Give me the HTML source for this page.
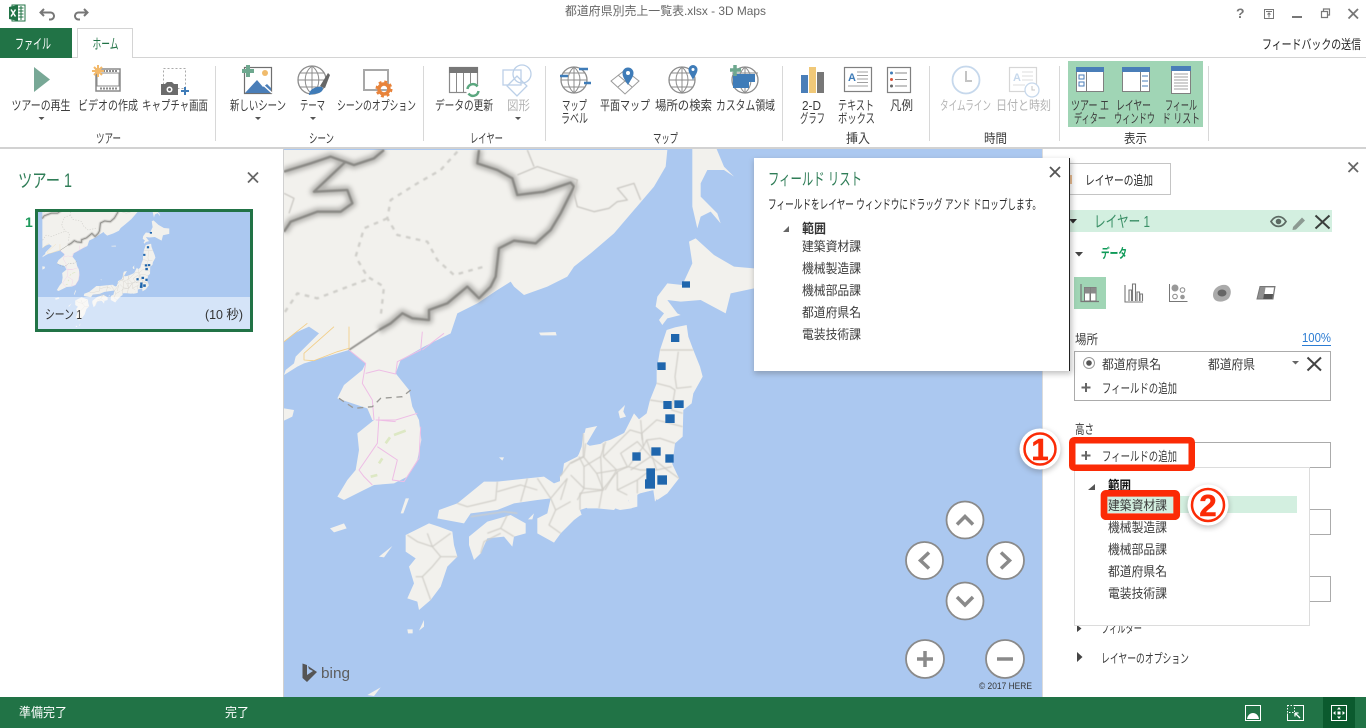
<!DOCTYPE html>
<html lang="ja"><head><meta charset="utf-8"><title>3D Maps</title>
<style>
html,body{margin:0;padding:0;width:1366px;height:728px;overflow:hidden;background:#fff}
svg{display:block}
text{font-family:"Liberation Sans","Noto Sans CJK JP",sans-serif;font-size:13px;fill:#3c3c3c}
.g{fill:#217346}.w{fill:#fff}.d{fill:#b4b4b4}.b{font-weight:700}
.i{fill:none;stroke:#808080;stroke-width:1.2}
</style></head><body>
<svg width="1366" height="728" viewBox="0 0 1366 728" xmlns="http://www.w3.org/2000/svg">
<defs>
<filter id="bl" x="-10%" y="-10%" width="120%" height="120%"><feGaussianBlur stdDeviation="7"/></filter>
<filter id="b2" x="-5%" y="-5%" width="110%" height="110%"><feGaussianBlur stdDeviation="1.500"/></filter>
<filter id="sh" x="-10%" y="-10%" width="120%" height="120%"><feGaussianBlur stdDeviation="3"/></filter>
<clipPath id="cm"><rect x="284" y="149" width="759" height="548"/></clipPath>
<clipPath id="ct"><rect x="38" y="212" width="212" height="117"/></clipPath>
<g id="land" transform="translate(284,150) scale(.33333)">
<g fill="#f2f1ed">
<polygon points="0,0 1150,0 1145,50 1110,110 1050,180 990,250 920,310 870,350 850,380 790,410 720,435 690,410 680,395 640,420 580,460 520,490 500,550 420,590 350,630 335,670 375,720 385,770 405,810 412,870 400,930 370,980 330,1000 270,1005 230,1025 180,1050 160,1040 190,990 215,960 225,900 220,850 270,810 265,810 250,775 160,745 180,705 235,660 245,640 195,600 60,640 40,650 0,675 5,660 30,640 35,620 65,590 105,550 75,530 30,550 0,575"/>
<polygon points="0,775 30,780 25,800 0,812"/>
<polygon points="1225,-10 1295,-10 1320,50 1350,80 1320,60 1270,60 1250,100 1250,140 1300,190 1310,220 1280,185 1250,200 1240,235 1225,170"/>
<polygon points="1215,275 1235,265 1290,315 1350,350 1410,355 1410,415 1340,430 1325,490 1250,450 1190,455 1150,450 1180,490 1190,495 1150,505 1135,525 1125,510 1140,490 1115,470 1120,440 1150,400 1195,405 1225,340"/>
<polygon points="765,548 815,546 818,556 770,556"/>
<g transform="translate(828,360)">
<polygon points="320,180 345,172 380,165 385,200 400,240 420,290 428,320 400,370 395,400 370,420 368,500 345,520 340,560 335,590 355,620 330,630 310,660 285,695 280,660 240,670 205,690 215,715 180,720 120,700 60,720 65,735 30,745 0,760 0,620 50,570 65,530 70,490 110,470 75,530 130,520 210,480 215,465 260,430 270,390 290,340 290,300 300,240"/>
<polygon points="175,425 195,405 190,425 198,440 180,445"/>
</g>
<g transform="translate(0,810)">
<polygon points="1050,-20 1015,50 960,65 930,85 905,70 918,45 940,18 905,25 900,50 905,70 880,110 840,130 835,165 850,175 810,190 780,170 730,175 640,185 600,185 520,250 465,270 460,295 540,310 560,280 640,270 690,250 760,240 800,235 790,280 760,295 760,340 810,368 830,340 870,300 890,285 865,265 880,240 910,265 940,265 990,270 1030,225 1040,265 1060,260 1060,220 1110,210 1120,240 1150,220 1185,175 1150,100"/>
<polygon points="555,350 610,305 680,285 725,310 725,340 690,350 685,380 660,350 610,355 590,400 570,420 555,375"/>
<polygon points="365,345 435,310 465,320 505,335 510,375 520,410 490,440 470,500 440,540 405,570 400,545 370,535 390,490 375,440 395,415 365,395"/>
<polygon points="138,325 180,310 188,325 150,337"/>
<polygon points="350,280 365,235 375,235 358,280"/>
<polygon points="285,410 325,378 300,412"/>
<polygon points="370,628 386,628 386,640 372,640"/>
<polygon points="405,632 420,600 420,620"/>
<polygon points="250,825 290,802 270,828"/>
<polygon points="645,112 660,112 655,122"/>
<polygon points="732,298 750,280 745,298"/>
</g>
</g>
<g fill="none" stroke-linejoin="round">
<path d="M520,5 470,60 400,100 320,150 310,205 340,255 430,275 460,330 510,375 600,350M310,205 240,235 215,320 250,380 300,410 290,500M245,390 100,445 40,430 0,490" stroke="#cfcec9" stroke-width="7" stroke-dasharray="14 16" filter="url(#b2)"/>
<path d="M285,540 320,520 355,490 385,505 435,510 435,480 490,460 550,410 570,430 585,445 620,410 635,380 645,295 690,272 755,280 800,240 830,190 870,110 860,98 780,125 700,135 685,85 640,60 580,40 585,0M0,65 80,40 140,20 210,45 270,25 300,0M185,35 90,125 190,120 205,160 170,185 100,185 20,215 0,245" stroke="#8e8d89" stroke-width="24" opacity=".6" filter="url(#bl)"/>
<path d="M285,540 320,520 355,490 385,505 435,510 435,480 490,460 550,410 570,430 585,445 620,410 635,380 645,295 690,272 755,280 800,240 830,190 870,110 860,98 780,125 700,135 685,85 640,60 580,40 585,0M0,65 80,40 140,20 210,45 270,25 300,0M185,35 90,125 190,120 205,160 170,185 100,185 20,215 0,245" stroke="#8a8985" stroke-width="7" filter="url(#b2)"/>
<path d="M285,540 195,600" stroke="#8f8e8a" stroke-width="5" filter="url(#b2)"/>
<path d="M700,75 760,50 880,90 870,130 880,170 930,185 975,175 1000,155 1030,150 1000,115 1050,100 1070,150M730,0 750,50M0,130 30,145 15,190" stroke="#cac8c3" stroke-width="4" filter="url(#b2)"/>
<path d="M195,600 245,640 235,700 265,750 270,810M245,670 285,660 335,672 340,635 410,600 415,545M415,600 480,550M275,810 335,810 400,790" stroke="#eebde5" stroke-width="3"/>
<path d="M0,575 70,520M150,530 60,610 60,630 90,632 160,605 195,595 195,530" stroke="#f2cd85" stroke-width="2.500"/>
<path d="M165,745 210,775 265,770 290,745 355,740 380,720" stroke="#9a9995" stroke-width="4" stroke-dasharray="18 14"/>
<g transform="translate(0,810)">
<path d="M285,-10 280,70 225,150 240,170 265,195M280,80 340,120 325,180 360,185 405,115 410,20M280,0 335,5" stroke="#eebde5" stroke-width="3"/>
<path d="M330,45 365,32M305,70 318,52M260,170 280,165M285,130 295,115" stroke="#dde8c4" stroke-width="8"/>
<path d="M860,130 900,110 905,70M885,110 900,140 900,205 880,240M900,140 950,110 965,65M950,110 955,210 945,265M860,165 900,205 955,210 1000,155 1030,140 1010,100 1060,65 1100,110M1000,155 1000,210 1030,225M1060,180 1060,220M1040,150 1100,110 1150,150 1185,175M1075,60 1070,0M1000,210 1060,180 1100,150M640,185 635,240 550,260 520,250M730,175 710,245M640,215 710,195 760,210M760,175 800,235 850,175M800,235 815,270 795,315 830,340M815,270 860,245M830,240 850,175M560,290 660,275 700,280M610,340 650,325 690,350M650,325 670,285M590,400 600,365 650,340M430,340 445,380 500,340M370,345 400,365 445,380 470,410 445,440 415,470 440,540M470,410 520,410M395,470 415,470" stroke="#d0cec8" stroke-width="3.500" filter="url(#b2)"/>
</g>
<g transform="translate(828,360)">
<path d="M300,240 345,240 400,240M355,245 345,320 350,355 395,350M290,340 330,350 345,360 335,420 368,430M270,390 335,400M245,490 290,450 368,470M245,490 250,530 260,510 300,505 345,520M250,530 205,590 170,600 135,660M205,590 240,600 290,600 335,590M260,510 290,600M130,520 130,560 170,600 110,610 70,560 30,580 0,620M70,490 70,560M130,560 210,480 245,490M110,610 130,660 60,670 60,720" stroke="#d0cec8" stroke-width="3.500" filter="url(#b2)"/>
</g>
</g>
</g>
<g id="mk" transform="translate(284,150) scale(.33333)"><g fill="#1f66ad" transform="translate(828,360)">
<rect x="366" y="34" width="24" height="19"/><rect x="333" y="192" width="25" height="24"/><rect x="292" y="277" width="25" height="23"/><rect x="310" y="393" width="25" height="24"/><rect x="343" y="391" width="28" height="23"/><rect x="316" y="433" width="28" height="26"/><rect x="274" y="532" width="28" height="25"/><rect x="217" y="547" width="25" height="25"/><rect x="316" y="553" width="25" height="25"/><rect x="259" y="595" width="26" height="36"/><rect x="255" y="628" width="30" height="28"/><rect x="292" y="616" width="29" height="28"/>
</g></g>
</defs>

<!-- title bar -->
<rect width="1366" height="728" fill="#fff"/>
<rect x="12" y="5" width="13" height="16" fill="#fff" stroke="#217346"/>
<path d="M18.500 8h5M18.500 11h5M18.500 14h5M18.500 17h5M21 6v14" stroke="#217346" fill="none"/>
<polygon points="9,7 18,5 18,21 9,19" fill="#217346"/>
<path d="M11,9.500 15.500,16.500M15.500,9.500 11,16.500" stroke="#fff" stroke-width="1.500"/>
<path d="M44,9 40.500,12.500 44,16M41,12.500h9a3.500,3.500 0 0 1 1,7h-2" fill="none" stroke="#777" stroke-width="2"/>
<path d="M84,9 87.500,12.500 84,16M87,12.500h-8a3.500,3.500 0 0 0 -1,7h2" fill="none" stroke="#777" stroke-width="2"/>
<text x="565" y="15" textLength="201" lengthAdjust="spacingAndGlyphs" style="fill:#666;font-size:12px">都道府県別売上一覧表.xlsx - 3D Maps</text>
<text x="1236" y="18" class="b" style="font-size:14px;fill:#777">?</text>
<rect x="1264.500" y="9.500" width="9" height="9" fill="none" stroke="#777"/><path d="M1266,11.500h6M1269,17.500v-4M1267.500,14.500 1269,13 1270.500,14.500" fill="none" stroke="#777"/>
<rect x="1292" y="16" width="10" height="2" fill="#777"/>
<path d="M1321.500,11.500h6v6h-6zM1323.500,11v-2h6v6h-2" fill="none" stroke="#777" stroke-width="1.200"/>
<path d="M1348.500,9 1358,18.500M1358,9 1348.500,18.500" stroke="#777" stroke-width="1.800"/>

<!-- tabs -->
<rect x="0" y="57" width="1366" height="1" fill="#d4d4d4"/>
<rect x="0" y="28" width="72" height="30" fill="#217346"/>
<text x="15" y="49" textLength="36" lengthAdjust="spacingAndGlyphs" class="w" style="font-size:14px">ファイル</text>
<path d="M77.500,58V28.500H132.500V58" fill="#fff" stroke="#d4d4d4"/>
<text x="92.500" y="49" textLength="26" lengthAdjust="spacingAndGlyphs" class="g" style="font-size:14px">ホーム</text>
<text x="1262" y="49" textLength="99" lengthAdjust="spacingAndGlyphs" style="fill:#222">フィードバックの送信</text>

<!-- ribbon separators -->
<g fill="#d8d8d8"><rect x="215" y="66" width="1" height="75"/><rect x="423" y="66" width="1" height="75"/><rect x="545" y="66" width="1" height="75"/><rect x="782" y="66" width="1" height="75"/><rect x="929" y="66" width="1" height="75"/><rect x="1059" y="66" width="1" height="75"/><rect x="1208" y="66" width="1" height="75"/></g>
<rect x="0" y="147" width="1366" height="2" fill="#d2d2d2"/>
<rect x="1068" y="61" width="135" height="66" fill="#a0d5b5"/>

<!-- ribbon icons -->
<polygon points="34,67 50,79.500 34,92" fill="#78a896"/>
<rect x="96" y="69" width="24" height="22" fill="#fff" stroke="#8a8a8a" stroke-width="1.500"/><rect x="97" y="73" width="22" height="13" fill="#fff" stroke="#8a8a8a"/>
<path d="M100,71h18M100,88.500h18" stroke="#8a8a8a" stroke-width="2" stroke-dasharray="2 1"/>
<path d="M98,65v12M92,71h12M94,67l8,8M102,67l-8,8" stroke="#f3b96a" stroke-width="2"/>
<rect x="163.500" y="68.500" width="22" height="20" fill="none" stroke="#aaa" stroke-dasharray="2 2"/>
<path d="M161,84h4l2,-2h5l2,2h4v11h-17z" fill="#6b6b6b"/><circle cx="169.500" cy="89.500" r="3" fill="#fff"/><circle cx="169.500" cy="89.500" r="1.500" fill="#6b6b6b"/>
<path d="M185,87v8M181,91h8" stroke="#3f7cb8" stroke-width="2"/>
<rect x="244.500" y="67.500" width="27" height="26" fill="#fff" stroke="#6f6f6f" stroke-width="1.200"/>
<path d="M245,93 257,80 263,87 267,84 271,88V93z" fill="#4a7eb8"/><path d="M260,82 272,93" stroke="#fff" stroke-width="1.500"/>
<circle cx="265" cy="73" r="3" fill="#f0bb6c"/>
<path d="M248,65v12M242,71h12" stroke="#6ea88f" stroke-width="4"/>
<circle cx="312" cy="80" r="14" fill="#fff" stroke="#8c8c8c" stroke-width="1.300"/>
<path d="M298,80h28M300,73h24M300,87h24M312,66v28M312,66c-9,7 -9,21 0,28M312,66c9,7 9,21 0,28" fill="none" stroke="#8c8c8c"/>
<path d="M320,86 328,73 330,75 325,88z" fill="#666"/><path d="M309,95c0,-6 8,-9 13,-8c2,2 0,5 -3,6z" fill="#3f7cb8"/>
<rect x="364" y="70" width="24" height="20" fill="#fff" stroke="#a8a8a8" stroke-width="2"/>
<circle cx="384" cy="89" r="5" fill="none" stroke="#e8833a" stroke-width="3.500"/><circle cx="384" cy="89" r="7.500" fill="none" stroke="#e8833a" stroke-width="2" stroke-dasharray="3 2.900"/>
<rect x="449.500" y="67.500" width="28" height="25" fill="#fff" stroke="#8a8a8a" stroke-width="1.200"/><rect x="449" y="67" width="29" height="6" fill="#777"/><path d="M456.500,73v19M463.500,73v19M470.500,73v19" stroke="#8a8a8a"/>
<circle cx="473" cy="90" r="7" fill="#fff"/><path d="M467.500,89a5.500,5.500 0 0 1 10,-2.500M478.500,91a5.500,5.500 0 0 1 -10,2.500" fill="none" stroke="#5ba77f" stroke-width="2.500"/>
<g fill="none" stroke="#bcd0e8" stroke-width="1.300"><rect x="503" y="70" width="18" height="15"/><circle cx="522" cy="74" r="9"/><rect x="510" y="79" width="14" height="14" transform="rotate(45 517 86)"/></g>
<circle cx="574" cy="80" r="13" fill="#fff" stroke="#8c8c8c" stroke-width="1.300"/>
<path d="M561,80h26M563,73h22M563,87h22M574,67v26M574,67c-8,7 -8,19 0,26M574,67c8,7 8,19 0,26" fill="none" stroke="#8c8c8c"/>
<path d="M560,76h8M579,69h9M584,83h7" stroke="#3f7cb8" stroke-width="2.500"/>
<polygon points="625,70 639,81 625,94 611,81" fill="#fff" stroke="#9a9a9a"/><path d="M618,75l14,12M632,75l-14,12" stroke="#9a9a9a"/>
<path d="M628,85c-3,-5 -5.500,-8 -5.500,-12a5.500,5.500 0 0 1 11,0c0,4 -3,7 -5.500,12z" fill="#3f7cb8"/><circle cx="628" cy="73" r="2" fill="#fff"/>
<circle cx="682" cy="80" r="13" fill="#fff" stroke="#8c8c8c" stroke-width="1.300"/>
<path d="M669,80h26M671,73h22M671,87h22M682,67v26M682,67c-8,7 -8,19 0,26M682,67c8,7 8,19 0,26" fill="none" stroke="#8c8c8c"/>
<path d="M693,80c-2,-5 -4.500,-7 -4.500,-10.500a4.500,4.500 0 0 1 9,0c0,3.500 -2.500,6 -4.500,10.500z" fill="#3f7cb8"/><circle cx="693" cy="69.500" r="1.500" fill="#fff"/>
<circle cx="745" cy="80" r="13" fill="#fff" stroke="#8c8c8c" stroke-width="1.300"/>
<path d="M732,73h26M745,67v26M745,67c-8,7 -8,19 0,26M745,67c8,7 8,19 0,26" fill="none" stroke="#8c8c8c"/>
<path d="M733,74h22v8h-6v6h-16z" fill="#3f7cb8"/><path d="M735,65v11M730,70h11" stroke="#6ea88f" stroke-width="3.500"/>
<rect x="801" y="75" width="7" height="18" fill="#4a7eb8"/><rect x="809" y="67" width="7" height="26" fill="#f0c878"/><rect x="817" y="72" width="7" height="21" fill="#777"/>
<rect x="844.500" y="67.500" width="27" height="24" fill="#fff" stroke="#808080" stroke-width="1.200"/>
<text x="848" y="81" class="b" style="font-size:11px;fill:#3f7cb8">A</text>
<path d="M857,72h11M857,75.500h11M857,79h11M857,82.500h11M848,86h20" stroke="#a0a0a0"/>
<rect x="887.500" y="67.500" width="23" height="25" fill="#fff" stroke="#808080" stroke-width="1.200"/>
<path d="M895,73h12M895,79.500h12M895,86h12" stroke="#888"/><circle cx="891.500" cy="73" r="1.500" fill="#3f7cb8"/><circle cx="891.500" cy="79.500" r="1.500" fill="#d9533a"/><circle cx="891.500" cy="86" r="1.500" fill="#666"/>
<circle cx="966" cy="80" r="13.500" fill="#fff" stroke="#c6d8ec" stroke-width="1.800"/><path d="M966,71v10h6" fill="none" stroke="#c4c4c4" stroke-width="2"/>
<rect x="1009.500" y="67.500" width="27" height="24" fill="#fff" stroke="#d6d6d6" stroke-width="1.200"/>
<text x="1013" y="81" class="b" style="font-size:11px;fill:#c6d8ec">A</text><path d="M1022,72h11M1022,76h11M1022,80h11M1013,85h12" stroke="#dcdcdc"/>
<circle cx="1032" cy="90" r="7" fill="#fff" stroke="#c6d8ec" stroke-width="1.300"/><path d="M1032,86v4h3" fill="none" stroke="#c4c4c4"/>
<rect x="1076.500" y="67.500" width="27" height="24" fill="#fff" stroke="#808080"/><rect x="1076" y="67" width="28" height="5" fill="#4a7eb8"/><path d="M1086.500,72v20" stroke="#808080"/><rect x="1079" y="75" width="5" height="4" fill="none" stroke="#4a7eb8"/><rect x="1079" y="82" width="5" height="4" fill="none" stroke="#4a7eb8"/>
<rect x="1122.500" y="67.500" width="27" height="24" fill="#fff" stroke="#808080"/><rect x="1122" y="67" width="28" height="5" fill="#4a7eb8"/><path d="M1140.500,72v20" stroke="#808080"/><path d="M1142,76h6M1142,81h6M1142,86h6" stroke="#4a7eb8"/>
<rect x="1171.500" y="66.500" width="19" height="27" fill="#fff" stroke="#808080"/><rect x="1171" y="66" width="20" height="5" fill="#4a7eb8"/><path d="M1174,74h14M1174,77h14M1174,80h14M1174,83h14M1174,86h14M1174,89h14" stroke="#a0a0a0"/>
<path d="M38.500,117h6l-3,3zM255,117h6l-3,3zM310,117h6l-3,3zM515,117h6l-3,3z" fill="#555"/>

<!-- ribbon labels -->
<text x="11.500" y="110" textLength="59" lengthAdjust="spacingAndGlyphs">ツアーの再生</text>
<text x="78" y="110" textLength="60" lengthAdjust="spacingAndGlyphs">ビデオの作成</text>
<text x="142" y="110" textLength="66" lengthAdjust="spacingAndGlyphs">キャプチャ画面</text>
<text x="230" y="110" textLength="56" lengthAdjust="spacingAndGlyphs">新しいシーン</text>
<text x="300" y="110" textLength="25" lengthAdjust="spacingAndGlyphs">テーマ</text>
<text x="337" y="110" textLength="79" lengthAdjust="spacingAndGlyphs">シーンのオプション</text>
<text x="435" y="110" textLength="58" lengthAdjust="spacingAndGlyphs">データの更新</text>
<text x="507" y="110" textLength="23" lengthAdjust="spacingAndGlyphs" class="d">図形</text>
<text x="562" y="110" textLength="25" lengthAdjust="spacingAndGlyphs">マップ</text>
<text x="561" y="123" textLength="27" lengthAdjust="spacingAndGlyphs">ラベル</text>
<text x="600" y="110" textLength="50" lengthAdjust="spacingAndGlyphs">平面マップ</text>
<text x="655" y="110" textLength="57" lengthAdjust="spacingAndGlyphs">場所の検索</text>
<text x="716" y="110" textLength="59" lengthAdjust="spacingAndGlyphs">カスタム領域</text>
<text x="802" y="110" textLength="19" lengthAdjust="spacingAndGlyphs">2-D</text>
<text x="800" y="123" textLength="25" lengthAdjust="spacingAndGlyphs">グラフ</text>
<text x="838" y="110" textLength="36" lengthAdjust="spacingAndGlyphs">テキスト</text>
<text x="838" y="123" textLength="37" lengthAdjust="spacingAndGlyphs">ボックス</text>
<text x="890" y="110" textLength="23" lengthAdjust="spacingAndGlyphs">凡例</text>
<text x="940" y="110" textLength="51" lengthAdjust="spacingAndGlyphs" class="d">タイムライン</text>
<text x="996" y="110" textLength="55" lengthAdjust="spacingAndGlyphs" class="d">日付と時刻</text>
<text x="1071" y="110" textLength="38" lengthAdjust="spacingAndGlyphs">ツアー エ</text>
<text x="1074" y="123" textLength="32" lengthAdjust="spacingAndGlyphs">ディター</text>
<text x="1116" y="110" textLength="35" lengthAdjust="spacingAndGlyphs">レイヤー</text>
<text x="1114" y="123" textLength="41" lengthAdjust="spacingAndGlyphs">ウィンドウ</text>
<text x="1165" y="110" textLength="32" lengthAdjust="spacingAndGlyphs">フィール</text>
<text x="1162" y="123" textLength="38" lengthAdjust="spacingAndGlyphs">ド リスト</text>
<text x="96" y="143" textLength="25" lengthAdjust="spacingAndGlyphs">ツアー</text>
<text x="309" y="143" textLength="25" lengthAdjust="spacingAndGlyphs">シーン</text>
<text x="470" y="143" textLength="33" lengthAdjust="spacingAndGlyphs">レイヤー</text>
<text x="653" y="143" textLength="25" lengthAdjust="spacingAndGlyphs">マップ</text>
<text x="846" y="143" textLength="24" lengthAdjust="spacingAndGlyphs">挿入</text>
<text x="984" y="143" textLength="23" lengthAdjust="spacingAndGlyphs">時間</text>
<text x="1124" y="143" textLength="23" lengthAdjust="spacingAndGlyphs">表示</text>

<!-- left panel -->
<rect x="283" y="149" width="1" height="548" fill="#d0d0d0"/>
<text x="18" y="187" textLength="54" lengthAdjust="spacingAndGlyphs" style="font-size:19px;fill:#2f7d57">ツアー 1</text>
<path d="M248,172.500 258,182.500M258,172.500 248,182.500" stroke="#666" stroke-width="1.800"/>
<text x="25" y="227" class="b" style="font-size:14px;fill:#1f9a5c">1</text>
<rect x="36.500" y="210.500" width="215" height="120" fill="#abc8f0" stroke="#217346" stroke-width="3"/>
<g clip-path="url(#ct)"><g transform="translate(-34.300,156) scale(.27)"><use href="#land"/><use href="#mk"/></g>
<rect x="38" y="297" width="212" height="32" fill="#fff" opacity=".5"/></g>
<text x="45" y="319" textLength="37" lengthAdjust="spacingAndGlyphs" style="fill:#333">シーン 1</text>
<text x="205" y="319" textLength="38" lengthAdjust="spacingAndGlyphs" style="fill:#333">(10 秒)</text>

<!-- map -->
<rect x="284" y="149" width="759" height="548" fill="#abc8f0"/>
<g clip-path="url(#cm)"><use href="#land"/><use href="#mk"/></g>
<path d="M302.500,663.500 307,665V675L313,671 309,669 308,666 317,672 307,682 302.500,678z" fill="#555"/>
<text x="321" y="678" textLength="29" lengthAdjust="spacingAndGlyphs" style="font-size:15px;fill:#5d5d5d">bing</text>
<text x="979" y="689" textLength="53" lengthAdjust="spacingAndGlyphs" style="font-size:9px;fill:#333">© 2017 HERE</text>
<g fill="#fff" stroke="#8a8a8a" stroke-width="1.800"><circle cx="965" cy="520" r="18.500"/><circle cx="924.500" cy="560.500" r="18.500"/><circle cx="1005.500" cy="560.500" r="18.500"/><circle cx="965" cy="601" r="18.500"/><circle cx="925" cy="659" r="19"/><circle cx="1005" cy="659" r="19"/></g>
<g fill="none" stroke="#8a8a8a" stroke-width="3.500"><path d="M957,524.500 965,516.500 973,524.500M929,552.500 920.500,560.500 929,568.500M1001,552.500 1009.500,560.500 1001,568.500M957,597 965,605 973,597"/><path d="M917,659h16M925,651v16M997,659h16" stroke-width="3.500"/></g>
<rect x="1042" y="149" width="1" height="548" fill="#dcdcdc"/>

<!-- right panel -->
<rect x="1043" y="149" width="323" height="548" fill="#fff"/>
<rect x="1062.500" y="163.500" width="108" height="31" fill="#fff" stroke="#c4c4c4"/>
<rect x="1070" y="175" width="2" height="9" fill="#eab88a"/>
<text x="1085" y="185" textLength="68" lengthAdjust="spacingAndGlyphs" style="fill:#2a2a2a">レイヤーの追加</text>
<path d="M1348.500,162.500 1358,172M1358,162.500 1348.500,172" stroke="#666" stroke-width="1.800"/>
<rect x="1060" y="210" width="272" height="22" fill="#d3efe0"/>
<text x="1094" y="227" textLength="56" lengthAdjust="spacingAndGlyphs" style="font-size:16px;fill:#3a8f66">レイヤー 1</text>
<path d="M1069,219h8l-4,4.500z" fill="#222"/>
<path d="M1271,221.500c4,-6.500 11,-6.500 15,0c-4,6.500 -11,6.500 -15,0z" fill="none" stroke="#5d6b64" stroke-width="1.700"/><circle cx="1278.500" cy="221.500" r="2.800" fill="#5d6b64"/>
<path d="M1293,227 1302,217.500 1305,220.500 1296,229.500 1292.500,230z" fill="#8c9a92"/>
<path d="M1315.500,215.500 1329.500,228.500M1329.500,215.500 1315.500,228.500" stroke="#3a3f3c" stroke-width="2"/>
<path d="M1075,252h8l-4,4.500z" fill="#444"/>
<text x="1101" y="258" textLength="26" lengthAdjust="spacingAndGlyphs" class="b" style="fill:#0f9a58">データ</text>
<rect x="1074" y="277" width="32" height="32" fill="#a0d5b5"/>
<path d="M1081,284v17.500h18" fill="none" stroke="#777" stroke-width="1.200"/>
<rect x="1084.500" y="287.500" width="5.500" height="13.500" fill="#fff" stroke="#777"/><rect x="1090.500" y="287.500" width="5.500" height="13.500" fill="#fff" stroke="#777"/>
<rect x="1084.500" y="287.500" width="5.500" height="6" fill="#8a8a8a"/><rect x="1090.500" y="287.500" width="5.500" height="6" fill="#8a8a8a"/>
<path d="M1125,285v17h18M1129,301v-11h2.500v11M1132.500,301v-17h3v17M1137,301v-9h2.500v9M1140,301v-7h2.500v7" fill="none" stroke="#777" stroke-width="1.100"/>
<path d="M1169.500,284v17.500h18" fill="none" stroke="#777"/><circle cx="1175" cy="288" r="3.500" fill="#999"/><circle cx="1182.500" cy="290" r="2.300" fill="none" stroke="#888"/><circle cx="1175" cy="296.500" r="2.300" fill="none" stroke="#888"/><circle cx="1182.500" cy="297" r="2.300" fill="#999"/>
<path d="M1213,295c0,-7 7,-11 13,-10c6,2 6,10 2,14c-5,4 -15,4 -15,-4z" fill="#aaa"/><ellipse cx="1222" cy="293" rx="4.500" ry="3.500" fill="#666"/>
<path d="M1260,286.500h15l-2,12.500h-16z" fill="#8f8f8f" stroke="#777"/><path d="M1265.500,287.500h8.500l-1,6.500h-8.500z" fill="#fff"/><path d="M1264,294h9l-.8,5h-9z" fill="#555"/>
<text x="1075" y="344" textLength="23" lengthAdjust="spacingAndGlyphs">場所</text>
<text x="1302" y="342" textLength="29" lengthAdjust="spacingAndGlyphs" style="fill:#2b7cd3">100%</text>
<rect x="1302" y="345" width="29" height="1" fill="#2b7cd3"/>
<rect x="1074.500" y="351.500" width="256" height="49" fill="#fff" stroke="#ababab"/>
<circle cx="1089" cy="363" r="5.500" fill="#fff" stroke="#999"/><circle cx="1089" cy="363" r="2.800" fill="#555"/>
<text x="1102" y="369" textLength="59" lengthAdjust="spacingAndGlyphs">都道府県名</text>
<text x="1208" y="369" textLength="47" lengthAdjust="spacingAndGlyphs">都道府県</text>
<path d="M1292,361h7l-3.500,3.500z" fill="#666"/>
<path d="M1307.500,357.500 1321,370.500M1321,357.500 1307.500,370.500" stroke="#444" stroke-width="2"/>
<path d="M1086,383v9M1081.500,387.500h9" stroke="#666" stroke-width="2"/>
<text x="1102" y="393" textLength="75" lengthAdjust="spacingAndGlyphs">フィールドの追加</text>
<text x="1075" y="434" textLength="19" lengthAdjust="spacingAndGlyphs">高さ</text>
<rect x="1074.500" y="442.500" width="256" height="25" fill="#fff" stroke="#ababab"/>
<path d="M1086,451v9M1081.500,455.500h9" stroke="#666" stroke-width="2"/>
<text x="1102" y="461" textLength="75" lengthAdjust="spacingAndGlyphs">フィールドの追加</text>
<rect x="1280" y="509.500" width="50.500" height="25" fill="#fff" stroke="#ababab"/>
<rect x="1280" y="576.500" width="50.500" height="25" fill="#fff" stroke="#ababab"/>
<path d="M1077,625l4.500,3.500-4.500,3.500z" fill="#444"/>
<text x="1101" y="633" textLength="41" lengthAdjust="spacingAndGlyphs">フィルター</text>
<path d="M1077,652l5.500,5-5.500,5z" fill="#444"/>
<text x="1101" y="663" textLength="88" lengthAdjust="spacingAndGlyphs">レイヤーのオプション</text>

<!-- dropdown -->
<rect x="1074.500" y="467.500" width="235" height="158" fill="#fff" stroke="#dcdcdc"/>
<path d="M1095,484v6h-7z" fill="#555"/>
<text x="1108" y="490" textLength="23" lengthAdjust="spacingAndGlyphs" class="b" style="fill:#111">範囲</text>
<rect x="1107" y="496" width="190" height="17" fill="#d3efe0"/>
<text x="1108" y="510" textLength="59" lengthAdjust="spacingAndGlyphs">建築資材課</text>
<text x="1108" y="532" textLength="59" lengthAdjust="spacingAndGlyphs">機械製造課</text>
<text x="1108" y="554" textLength="59" lengthAdjust="spacingAndGlyphs">機械部品課</text>
<text x="1108" y="576" textLength="59" lengthAdjust="spacingAndGlyphs">都道府県名</text>
<text x="1108" y="598" textLength="59" lengthAdjust="spacingAndGlyphs">電装技術課</text>

<!-- field list dialog -->
<rect x="754" y="160" width="318" height="214" fill="#555" opacity=".35" filter="url(#sh)"/>
<rect x="754" y="158" width="315" height="213" fill="#fff"/>
<rect x="1069" y="158" width="1" height="213" fill="#222"/>
<path d="M1050,167 1060,177M1060,167 1050,177" stroke="#555" stroke-width="1.800"/>
<text x="768" y="185" textLength="94" lengthAdjust="spacingAndGlyphs" style="font-size:17px;fill:#2f7d57">フィールド リスト</text>
<text x="768" y="209" textLength="273" lengthAdjust="spacingAndGlyphs" style="fill:#2a2a2a">フィールドをレイヤー ウィンドウにドラッグ アンド ドロップします。</text>
<path d="M789,226v6h-6z" fill="#666"/>
<text x="802" y="233" textLength="24" lengthAdjust="spacingAndGlyphs" class="b" style="fill:#333">範囲</text>
<text x="802" y="251" textLength="59" lengthAdjust="spacingAndGlyphs">建築資材課</text>
<text x="802" y="273" textLength="59" lengthAdjust="spacingAndGlyphs">機械製造課</text>
<text x="802" y="295" textLength="59" lengthAdjust="spacingAndGlyphs">機械部品課</text>
<text x="802" y="317" textLength="59" lengthAdjust="spacingAndGlyphs">都道府県名</text>
<text x="802" y="339" textLength="59" lengthAdjust="spacingAndGlyphs">電装技術課</text>

<!-- annotations -->
<rect x="1072.250" y="440.250" width="119.500" height="27.500" rx="2" fill="none" stroke="#fb2b06" stroke-width="6.500"/>
<rect x="1104" y="493.300" width="72.700" height="23.400" rx="2" fill="none" stroke="#fb2b06" stroke-width="6.700"/>
<g>
<circle cx="1040" cy="451" r="21" fill="#555" opacity=".35" filter="url(#sh)"/>
<circle cx="1040" cy="449" r="20.500" fill="#fff"/>
<circle cx="1040" cy="449" r="15.500" fill="none" stroke="#fb2b06" stroke-width="2.500"/>
<text x="1040" y="460" text-anchor="middle" class="b" style="font-size:31px;fill:#fb2b06;stroke:#fb2b06;stroke-width:.6">1</text>
<circle cx="1208" cy="507" r="21" fill="#555" opacity=".35" filter="url(#sh)"/>
<circle cx="1208" cy="505" r="20.500" fill="#fff"/>
<circle cx="1208" cy="505" r="16" fill="none" stroke="#fb2b06" stroke-width="2.500"/>
<text x="1208" y="516" text-anchor="middle" class="b" style="font-size:31px;fill:#fb2b06;stroke:#fb2b06;stroke-width:.6">2</text>
</g>

<!-- status bar -->
<rect x="0" y="697" width="1366" height="31" fill="#217346"/>
<text x="19" y="717" textLength="48" lengthAdjust="spacingAndGlyphs" class="w">準備完了</text>
<text x="225" y="717" textLength="24" lengthAdjust="spacingAndGlyphs" class="w">完了</text>
<rect x="1323" y="697" width="32" height="31" fill="#0b5a2e"/>
<rect x="1245.500" y="705.500" width="15" height="15" fill="none" stroke="#fff"/><path d="M1247,719c1,-8 11,-8 12,0z" fill="#fff"/>
<path d="M1295,705.500h8.500v15h-16v-7" fill="none" stroke="#fff"/><rect x="1287.500" y="705.500" width="7" height="7" fill="none" stroke="#fff" stroke-dasharray="1.500 1.500"/><path d="M1295,713l5,5M1295,713h3.500M1295,713v3.500" fill="none" stroke="#fff" stroke-width="1.300"/>
<rect x="1331.500" y="705.500" width="15" height="15" fill="none" stroke="#fff"/><path d="M1339,707l2,2.500h-4zM1339,719l2,-2.500h-4zM1333,713l2.500,-2v4zM1345,713l-2.500,-2v4z" fill="#fff"/><rect x="1337.500" y="711.500" width="3" height="3" fill="#fff"/>
</svg>
</body></html>
